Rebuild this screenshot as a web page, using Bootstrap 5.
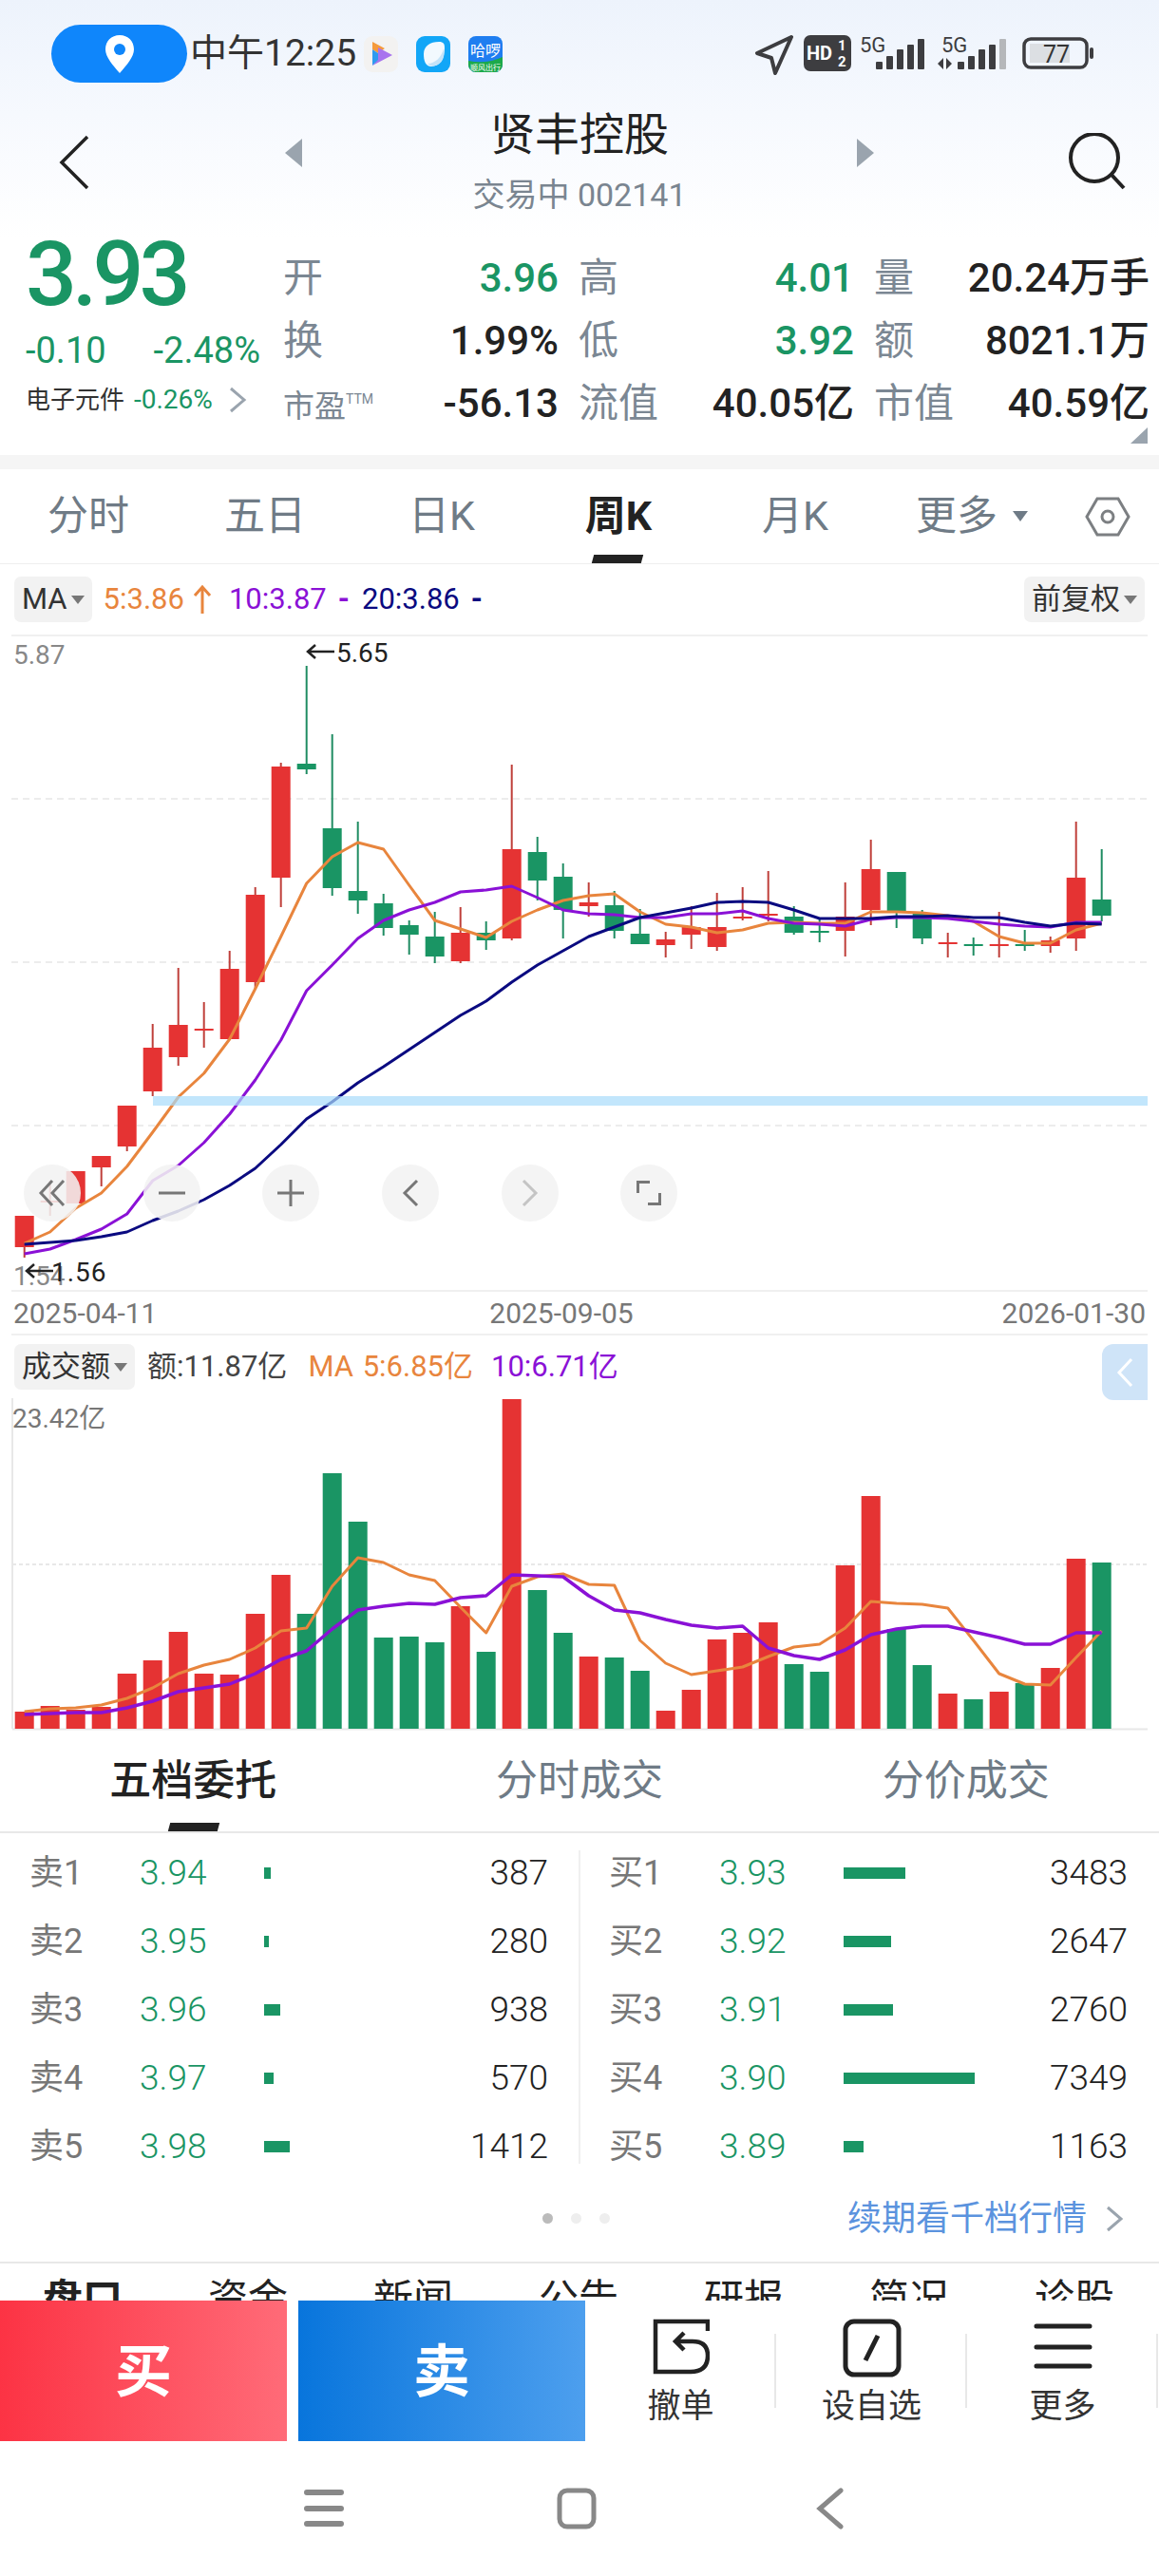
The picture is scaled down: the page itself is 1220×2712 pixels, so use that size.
<!doctype html>
<html lang="zh-CN">

<head>
  <meta charset="utf-8">
  <meta name="viewport" content="width=device-width, initial-scale=1">
  <title>贤丰控股</title>
  <link href="https://cdn.jsdelivr.net/npm/bootstrap@5.3.5/dist/css/bootstrap.min.css" rel="stylesheet">
  <style>
    body {
      width: 1220px;
      height: 2712px;
      overflow: hidden;
      background-color: #fff;
      color: #222;
      font-family: Roboto, "Noto Sans CJK SC", sans-serif;
    }

    .top-head {
      height: 479px;
      position: relative;
      background: linear-gradient(#edf3fc 0, #f6f9fe 120px, #fff 250px);
    }

    .status-bar {
      height: 112px;
      padding: 26px 68px 0 54px;
    }

    .loc-pill {
      width: 143px;
      height: 61px;
      border-radius: 31px;
      background-color: #0f86fb;
    }

    .status-time {
      font-size: 39px;
      line-height: 61px;
      margin: 0 8px 0 3px;
      color: #333;
    }

    .app-icons {
      gap: 19px;
      height: 61px;
    }

    .status-right {
      gap: 11px;
      padding-top: 11px;
    }

    .title-row {
      height: 126px;
    }

    .back-cell {
      width: 300px;
      padding: 30px 0 0 62px;
    }

    .tri-icon {
      margin-top: 34px;
    }

    .search-cell {
      width: 300px;
      padding: 28px 35px 0 0;
    }

    .stock-name {
      font-size: 47px;
      line-height: 60px;
    }

    .stock-sub {
      font-size: 34px;
      line-height: 66px;
      color: #7a8590;
    }

    .quote-left {
      width: 298px;
      padding: 11px 0 0 27px;
      color: #1a9564;
    }

    .quote-price {
      font-size: 95px;
      line-height: 80px;
      font-weight: 500;
      letter-spacing: -5px;
    }

    .quote-change {
      font-size: 38px;
      line-height: 50px;
      margin: 15px 24px 0 0;
    }

    .quote-sector {
      font-size: 26px;
      line-height: 40px;
      margin-top: 7px;
      color: #333;
    }

    .sector-pct {
      font-size: 28px;
      margin-left: 10px;
      color: #1a9564;
    }

    .stat-grid {
      display: grid;
      grid-template-columns: repeat(3, 290px);
      column-gap: 21px;
      grid-auto-rows: 66px;
      padding-top: 22px;
    }

    .stat-cell {
      line-height: 66px;
      font-size: 42px;
      font-weight: 500;
    }

    .stat-label {
      font-size: 42px;
      font-weight: 400;
      color: #7b8793;
    }

    .stat-label-sm {
      font-size: 33px;
    }

    .stat-label sup {
      font-size: 14px;
      top: -14px;
    }

    .green-num {
      color: #1a9564;
    }

    .corner-tri {
      position: absolute;
      right: 12px;
      top: 450px;
    }

    .gray-band {
      height: 15px;
      background-color: #f5f5f5;
    }

    .tab-row {
      height: 100px;
      border-bottom: 1px solid #eee;
    }

    .tab-item {
      width: 186px;
      font-size: 43px;
      color: #6f7b86;
      position: relative;
    }

    .tab-on {
      color: #222;
      font-weight: 700;
    }

    .tab-on::after {
      content: "";
      position: absolute;
      left: 66px;
      bottom: 0;
      width: 52px;
      height: 9px;
      background-color: #222;
      transform: skewX(-15deg);
    }

    .more-tri {
      width: 0;
      height: 0;
      margin-left: 16px;
      border-left: 8px solid transparent;
      border-right: 8px solid transparent;
      border-top: 11px solid #6f7b86;
    }

    .hex-cell {
      width: 100px;
    }

    .ma-row {
      height: 76px;
      margin: 0 12px;
      padding: 13px 3px 0;
      border-bottom: 2px solid #f0f0f0;
      font-size: 31px;
      line-height: 48px;
    }

    .chip-gray {
      height: 48px;
      padding: 0 8px;
      border-radius: 7px;
      background-color: #f2f2f2;
      font-size: 31px;
      color: #333;
    }

    .chip-tri {
      width: 0;
      height: 0;
      margin-left: 4px;
      border-left: 7px solid transparent;
      border-right: 7px solid transparent;
      border-top: 9px solid #777;
    }

    .ma-orange {
      color: #e8853d;
    }

    .ma-purple {
      color: #8a11d6;
    }

    .ma-navy {
      color: #0a0a80;
    }

    .ma-first {
      margin-left: 12px;
    }

    .ma-arrow {
      margin: 0 18px 0 9px;
    }

    .ma-last {
      margin-left: 13px;
    }

    .ma-dash {
      margin-left: 12px;
      font-weight: 700;
    }

    .chart-wrap {
      position: relative;
      height: 688px;
    }

    .chart-wrap svg,
    .vol-chart svg {
      display: block;
    }

    .chart-text {
      font-family: Roboto, "Noto Sans CJK SC", sans-serif;
      font-size: 28px;
    }

    .zoom-btns {
      position: absolute;
      left: 25px;
      top: 556px;
      gap: 65.7px;
    }

    .zoom-btn {
      width: 60px;
      height: 60px;
      border-radius: 50%;
      background-color: rgba(242, 242, 242, .87);
    }

    .date-row {
      height: 48px;
      margin: 0 12px;
      border-top: 2px solid #f0f0f0;
      border-bottom: 2px solid #f0f0f0;
      padding: 0 2px;
      font-size: 30px;
      color: #777;
    }

    .date-mid {
      margin-right: 38px;
    }

    .vol-row {
      height: 62px;
      padding: 9px 12px 0 15px;
      font-size: 31px;
      line-height: 48px;
    }

    .vol-amount {
      margin-left: 13px;
      color: #444;
    }

    .vol-ma5 {
      margin-left: 22px;
    }

    .vol-ma5 b {
      font-weight: 400;
      margin-left: 2px;
    }

    .vol-ma10 {
      margin-left: 19px;
    }

    .fold-tab {
      width: 48px;
      height: 59px;
      margin-left: auto;
      border-radius: 12px 0 0 12px;
      background-color: #cfe4f8;
    }

    .sub-tabs {
      height: 108px;
      border-bottom: 2px solid #e8e8e8;
    }

    .sub-tab {
      width: 406.67px;
      font-size: 44px;
      color: #6f7b86;
      position: relative;
    }

    .sub-tab-on {
      color: #222;
      font-weight: 500;
    }

    .sub-tab-on::after {
      content: "";
      position: absolute;
      left: 178px;
      bottom: 0;
      width: 52px;
      height: 9px;
      background-color: #222;
      transform: skewX(-15deg);
    }

    .book {
      padding-top: 6px;
    }

    .book-col {
      width: 609px;
    }

    .book-side-l {
      padding: 0 32px 0 31px;
    }

    .book-side-r {
      padding: 0 33px 0 30px;
    }

    .book-sep {
      width: 2px;
      margin: 12px 0 18px;
      background-color: #f0f0f0;
    }

    .book-row {
      height: 72px;
      font-size: 37px;
      font-weight: 300;
    }

    .book-lab {
      width: 116px;
      color: #777;
      font-weight: 400;
      font-size: 36px;
    }

    .book-price {
      width: 131px;
      color: #1a9564;
    }

    .book-bar-cell {
      width: 170px;
    }

    .book-bar {
      height: 12px;
      background-color: #1a9564;
    }

    .book-qty {
      margin-left: auto;
    }

    .more-link-row {
      height: 87px;
      padding: 0 38px 6px 31px;
      border-bottom: 2px solid #e8e8e8;
      display: grid;
      grid-template-columns: 1fr auto 1fr;
      align-items: center;
    }

    .page-dots {
      gap: 19px;
    }

    .page-dot {
      width: 11px;
      height: 11px;
      border-radius: 50%;
      background-color: #eee;
    }

    .page-dot-on {
      background-color: #bbb;
    }

    .more-link {
      font-size: 36px;
      color: #5b93de;
      gap: 20px;
    }

    .cut-tabs {
      height: 39px;
      overflow: hidden;
      padding-top: 13px;
    }

    .cut-tab {
      width: 174px;
      font-size: 42px;
      line-height: 50px;
      text-align: center;
    }

    .action-bar {
      height: 148px;
    }

    .buy-btn,
    .sell-btn {
      width: 302px;
      height: 148px;
      padding: 4px 0 0;
      font-size: 60px;
      font-weight: 700;
      color: #fff;
    }

    .buy-btn {
      background: linear-gradient(90deg, #fc3344, #ff6b78);
    }

    .sell-btn {
      margin-left: 12px;
      background: linear-gradient(90deg, #0875dc, #4d9fee);
    }

    .act-cell {
      width: 199px;
      padding: 19px 0 0 2px;
      font-size: 35px;
      line-height: 40px;
      color: #333;
    }

    .act-icon {
      height: 73px;
    }

    .act-sep {
      width: 2px;
      height: 78px;
      margin-top: 35px;
      background-color: #e8e8e8;
    }

    .sys-nav {
      height: 142px;
      gap: 224px;
      padding-right: 6px;
    }
  </style>
</head>

<body>
  <div class="top-head">
    <div class="status-bar d-flex align-items-start">
      <div class="loc-pill d-flex align-items-center justify-content-center">
        <svg width="32" height="40" viewBox="0 0 32 40">
          <path fill="#fff" d="M16 0C7 0 1 6.5 1 15c0 8 8 17 15 25 7-8 15-17 15-25C31 6.500 25 0 16 0z" />
          <circle cx="16" cy="15" r="6" fill="#0f86fb" />
        </svg>
      </div>
      <div class="status-time">中午12:25</div>
      <div class="app-icons d-flex align-items-center">
        <svg width="36" height="38" viewBox="0 0 36 38">
          <rect width="36" height="38" rx="9" fill="#f3f2f1" />
          <path d="M9 6 L22 13 L15 18 L9 14z" fill="#f59a3c" />
          <path d="M9 14 L15 18 L15 26 L9 31z" fill="#2f9bef" />
          <path d="M15 12 L30 20 L9 31 L15 25z" fill="#a874ee" />
        </svg>
        <svg width="36" height="38" viewBox="0 0 36 38">
          <rect width="36" height="38" rx="9" fill="#12a6f7" />
          <path d="M8 19C8 10 15 6 24 6c5 0 6 2 6 7 0 10-5 19-14 19-6 0-8-6-8-13z" fill="#f2f9fe" />
          <path d="M12 29c8 0 15-7 17-16 2 9-2 17-9 18-3 1-6 0-8-2z" fill="#c4e3f8" />
        </svg>
        <svg width="36" height="38" viewBox="0 0 36 38">
          <rect width="36" height="38" rx="8" fill="#1f7ef0" />
          <path d="M0 26 Q18 30 36 22 V30 A8 8 0 0 1 28 38 H8 A8 8 0 0 1 0 30z" fill="#1ca94a" />
          <text x="18" y="21" font-size="16" fill="#fff" text-anchor="middle" font-family="Noto Sans CJK SC">哈啰</text>
          <text x="18" y="36" font-size="8" fill="#fff" text-anchor="middle" font-family="Noto Sans CJK SC">顺风出行</text>
        </svg>
      </div>
      <div class="status-right d-flex align-items-start ms-auto">
        <svg width="40" height="42" viewBox="0 0 40 42" fill="none">
          <path d="M38 2 L2 19 L17 24 L21 40z" stroke="#3d3d40" stroke-width="4" stroke-linejoin="round" />
        </svg>
        <svg width="50" height="38" viewBox="0 0 50 38">
          <rect width="50" height="38" rx="7" fill="#3d3d40" />
          <text x="3" y="26" font-size="20" font-weight="700" fill="#fff" font-family="Roboto">HD</text>
          <text x="36" y="16" font-size="15" font-weight="700" fill="#fff" font-family="Roboto">1</text>
          <text x="36" y="33" font-size="15" font-weight="700" fill="#fff" font-family="Roboto">2</text>
        </svg>
        <svg width="70" height="38" viewBox="0 0 70 38" style="margin-left:-2px">
          <text x="0" y="18" font-size="22" fill="#3d3d40" font-family="Roboto">5G</text>
          <g fill="#3d3d40">
            <rect x="17" y="28" width="7" height="8" rx="1" />
            <rect x="28" y="22" width="7" height="14" rx="1" />
            <rect x="39" y="15" width="7" height="21" rx="1" />
            <rect x="50" y="10" width="7" height="26" rx="1" />
            <rect x="61" y="4" width="7" height="32" rx="1" />
          </g>
        </svg>
        <svg width="74" height="38" viewBox="0 0 74 38" style="margin-left:1px">
          <text x="4" y="18" font-size="22" fill="#3d3d40" font-family="Roboto">5G</text>
          <path d="M0 30 L6 24 V36z M9 24 L15 30 L9 36z" fill="#3d3d40" />
          <g fill="#3d3d40">
            <rect x="21" y="28" width="7" height="8" rx="1" />
            <rect x="32" y="22" width="7" height="14" rx="1" />
            <rect x="43" y="15" width="7" height="21" rx="1" />
            <rect x="54" y="10" width="7" height="26" rx="1" />
          </g>
          <rect x="65" y="4" width="7" height="32" rx="1" fill="#b5b7ba" />
        </svg>
        <svg width="76" height="34" viewBox="0 0 76 34" style="margin:2px 0 0 4px">
          <rect x="2" y="2" width="66" height="30" rx="7" fill="none" stroke="#3d3d40" stroke-width="3.500" />
          <rect x="8" y="7" width="42" height="20" fill="#dcdfe3" />
          <text x="22" y="27" font-size="25" fill="#333" font-family="Roboto">77</text>
          <rect x="71" y="11" width="4" height="12" rx="2" fill="#3d3d40" />
        </svg>
      </div>
    </div>

    <div class="title-row d-flex align-items-start">
      <div class="back-cell">
        <svg class="d-block" width="32" height="58" viewBox="0 0 32 58" fill="none">
          <path d="M30 2 L3 29 L30 56" stroke="#222" stroke-width="3.500" />
        </svg>
      </div>
      <svg class="tri-icon" width="18" height="30" viewBox="0 0 18 30">
        <path d="M18 0 V30 L0 15z" fill="#9aa4ae" />
      </svg>
      <div class="flex-fill text-center">
        <div class="stock-name">贤丰控股</div>
        <div class="stock-sub">交易中 002141</div>
      </div>
      <svg class="tri-icon" width="18" height="30" viewBox="0 0 18 30">
        <path d="M0 0 V30 L18 15z" fill="#9aa4ae" />
      </svg>
      <div class="search-cell text-end">
        <svg width="62" height="60" viewBox="0 0 62 60" fill="none" stroke="#222" stroke-width="4">
          <circle cx="29" cy="26" r="25" />
          <path d="M47 44 L60 58" />
        </svg>
      </div>
    </div>

    <div class="d-flex">
      <div class="quote-left">
        <div class="quote-price">3.93</div>
        <div class="d-flex justify-content-between">
          <div class="quote-change">-0.10</div>
          <div class="quote-change">-2.48%</div>
        </div>
        <div class="quote-sector d-flex align-items-center">
          电子元件<span class="sector-pct">-0.26%</span>
          <svg class="ms-3" width="20" height="28" viewBox="0 0 20 28" fill="none">
            <path d="M3 2 L17 14 L3 26" stroke="#9aa4ae" stroke-width="3" />
          </svg>
        </div>
      </div>
      <div class="stat-grid" id="statGrid"></div>
    </div>

    <svg class="corner-tri" width="18" height="17" viewBox="0 0 18 17">
      <path d="M18 0 V17 H0z" fill="#9aa4ae" />
    </svg>
  </div>

  <div class="gray-band"></div>

  <div class="tab-row d-flex">
    <div class="tab-item d-flex align-items-center justify-content-center">分时</div>
    <div class="tab-item d-flex align-items-center justify-content-center">五日</div>
    <div class="tab-item d-flex align-items-center justify-content-center">日K</div>
    <div class="tab-item tab-on d-flex align-items-center justify-content-center">周K</div>
    <div class="tab-item d-flex align-items-center justify-content-center">月K</div>
    <div class="tab-item d-flex align-items-center justify-content-center">更多<span class="more-tri"></span></div>
    <div class="hex-cell d-flex align-items-center justify-content-center">
      <svg width="48" height="42" viewBox="0 0 48 42" fill="none" stroke="#7c7f82" stroke-width="3">
        <path d="M13 2 H35 L46 21 L35 40 H13 L2 21z" />
        <circle cx="24" cy="21" r="6" />
      </svg>
    </div>
  </div>

  <div class="ma-row d-flex justify-content-between align-items-start">
    <div class="d-flex align-items-center">
      <div class="chip-gray d-flex align-items-center">MA<span class="chip-tri"></span></div>
      <span class="ma-orange ma-first">5:3.86</span>
      <svg class="ma-arrow" width="20" height="32" viewBox="0 0 20 32" fill="none" stroke="#e8853d" stroke-width="3">
        <path d="M10 31 V3 M2 12 L10 3 L18 12" />
      </svg>
      <span class="ma-purple">10:3.87<span class="ma-dash">-</span></span>
      <span class="ma-navy ma-last">20:3.86<span class="ma-dash">-</span></span>
    </div>
    <div class="chip-gray d-flex align-items-center">前复权<span class="chip-tri"></span></div>
  </div>

  <div class="chart-wrap">
    <svg id="priceChart" width="1220" height="688" viewBox="0 670 1220 688"></svg>
    <div class="zoom-btns d-flex">
      <div class="zoom-btn d-flex align-items-center justify-content-center">
        <svg width="30" height="30" viewBox="0 0 30 30" fill="none" stroke="#777" stroke-width="3">
          <path d="M15 2 L3 15 L15 28 M27 2 L15 15 L27 28" />
        </svg>
      </div>
      <div class="zoom-btn d-flex align-items-center justify-content-center">
        <svg width="30" height="30" viewBox="0 0 30 30" fill="none" stroke="#777" stroke-width="3">
          <path d="M1 15 H29" />
        </svg>
      </div>
      <div class="zoom-btn d-flex align-items-center justify-content-center">
        <svg width="30" height="30" viewBox="0 0 30 30" fill="none" stroke="#777" stroke-width="3">
          <path d="M1 15 H29 M15 1 V29" />
        </svg>
      </div>
      <div class="zoom-btn d-flex align-items-center justify-content-center">
        <svg width="18" height="30" viewBox="0 0 18 30" fill="none" stroke="#777" stroke-width="3">
          <path d="M16 2 L3 15 L16 28" />
        </svg>
      </div>
      <div class="zoom-btn d-flex align-items-center justify-content-center">
        <svg width="18" height="30" viewBox="0 0 18 30" fill="none" stroke="#c4c4c4" stroke-width="3">
          <path d="M2 2 L15 15 L2 28" />
        </svg>
      </div>
      <div class="zoom-btn d-flex align-items-center justify-content-center">
        <svg width="26" height="26" viewBox="0 0 26 26" fill="none" stroke="#777" stroke-width="3">
          <path d="M1.500 13 V1.500 H14 M24.500 13 V24.500 H12" />
        </svg>
      </div>
    </div>
  </div>

  <div class="date-row d-flex justify-content-between align-items-center">
    <span>2025-04-11</span>
    <span class="date-mid">2025-09-05</span>
    <span>2026-01-30</span>
  </div>

  <div class="vol-row d-flex align-items-start">
    <div class="chip-gray d-flex align-items-center">成交额<span class="chip-tri"></span></div>
    <span class="vol-amount">额:11.87亿</span>
    <span class="vol-ma5 ma-orange">MA <b>5:6.85亿</b></span>
    <span class="vol-ma10 ma-purple">10:6.71亿</span>
    <div class="fold-tab d-flex align-items-center justify-content-center">
      <svg width="18" height="32" viewBox="0 0 18 32" fill="none" stroke="#fff" stroke-width="3">
        <path d="M16 2 L3 16 L16 30" />
      </svg>
    </div>
  </div>

  <div class="vol-chart">
    <svg id="volChart" width="1220" height="354" viewBox="0 1468 1220 354"></svg>
  </div>

  <div class="sub-tabs d-flex">
    <div class="sub-tab sub-tab-on d-flex align-items-center justify-content-center">五档委托</div>
    <div class="sub-tab d-flex align-items-center justify-content-center">分时成交</div>
    <div class="sub-tab d-flex align-items-center justify-content-center">分价成交</div>
  </div>

  <div class="book d-flex">
    <div class="book-col book-side-l" id="sellSide"></div>
    <div class="book-sep"></div>
    <div class="book-col book-side-r" id="buySide"></div>
  </div>

  <div class="more-link-row">
    <div></div>
    <div class="page-dots d-flex">
      <span class="page-dot page-dot-on"></span>
      <span class="page-dot"></span>
      <span class="page-dot"></span>
    </div>
    <div class="more-link d-flex align-items-center justify-content-end">
      续期看千档行情
      <svg width="18" height="28" viewBox="0 0 18 28" fill="none">
        <path d="M2 2 L16 14 L2 26" stroke="#9aa4ae" stroke-width="3" />
      </svg>
    </div>
  </div>

  <div class="cut-tabs d-flex">
    <div class="cut-tab fw-bold">盘口</div>
    <div class="cut-tab">资金</div>
    <div class="cut-tab">新闻</div>
    <div class="cut-tab">公告</div>
    <div class="cut-tab">研报</div>
    <div class="cut-tab">简况</div>
    <div class="cut-tab">诊股</div>
  </div>

  <div class="action-bar d-flex">
    <button type="button" class="btn buy-btn rounded-0 border-0">买</button>
    <button type="button" class="btn sell-btn rounded-0 border-0">卖</button>
    <div class="act-cell text-center">
      <div class="act-icon">
        <svg width="60" height="60" viewBox="0 0 60 60" fill="none" stroke="#222" stroke-width="4.500">
          <path d="M58 13 V3 H3 V56 H40 Q58 56 58 39 Q58 24 42 24 H25 M33 15 L24 24 L33 33" />
        </svg>
      </div>
      <div>撤单</div>
    </div>
    <div class="act-sep"></div>
    <div class="act-cell text-center">
      <div class="act-icon">
        <svg width="62" height="62" viewBox="0 0 62 62" fill="none" stroke="#222" stroke-width="5">
          <rect x="3" y="3" width="56" height="56" rx="9" />
          <path d="M37 18 L24 44" />
        </svg>
      </div>
      <div>设自选</div>
    </div>
    <div class="act-sep"></div>
    <div class="act-cell text-center">
      <div class="act-icon">
        <svg width="62" height="62" viewBox="0 0 62 62" fill="none" stroke="#222" stroke-width="5" stroke-linecap="round">
          <path d="M3 8 H59 M3 30 H59 M3 50 H59" />
        </svg>
      </div>
      <div>更多</div>
    </div>
    <div class="act-sep"></div>
  </div>

  <div class="sys-nav d-flex align-items-center justify-content-center">
    <svg width="42" height="42" viewBox="0 0 42 42" fill="none" stroke="#888" stroke-width="6" stroke-linecap="round">
      <path d="M3 4 H39 M3 21 H39 M3 37 H39" />
    </svg>
    <svg width="42" height="44" viewBox="0 0 42 44" fill="none" stroke="#888" stroke-width="5">
      <rect x="3" y="3" width="36" height="38" rx="8" />
    </svg>
    <svg width="42" height="44" viewBox="0 0 42 44" fill="none" stroke="#888" stroke-width="5" stroke-linecap="round">
      <path d="M33 3 L11 22 L33 41" />
    </svg>
  </div>

  <script>
    const GREEN = "#1a9564", RED = "#e53333", GREEN_WICK = "#1f8c62", RED_WICK = "#bf3f3a";

    const stats = [
      ["开", "3.96", true], ["高", "4.01", true], ["量", "20.24万手", false],
      ["换", "1.99%", false], ["低", "3.92", true], ["额", "8021.1万", false],
      ["<span class='stat-label-sm'>市盈</span><sup>TTM</sup>", "-56.13", false], ["流值", "40.05亿", false], ["市值", "40.59亿", false]
    ];
    document.getElementById("statGrid").innerHTML = stats.map(s => `
      <div class="stat-cell d-flex justify-content-between">
        <span class="stat-label">${s[0]}</span>
        <span class="${s[2] ? "green-num" : ""}">${s[1]}</span>
      </div>`).join("");

    const xAt = i => 25.7 + 27 * i;
    const linePath = (ys, color, w) =>
      `<polyline fill="none" stroke="${color}" stroke-width="${w}" stroke-linejoin="round" points="${ys.map((y, i) => xAt(i) + "," + y).join(" ")}" />`;
    const dashed = y => `<line x1="12" x2="1208" y1="${y}" y2="${y}" stroke="#ececec" stroke-width="2" stroke-dasharray="7 5" />`;

    // [color, wick top, wick bottom, body top, body bottom]
    const candles = [
      ["r", 1280, 1324, 1280, 1313], ["r", 1243, 1280, 1264, 1266], ["r", 1233, 1267, 1233, 1267],
      ["r", 1217, 1249, 1217, 1229], ["r", 1164, 1212, 1164, 1207], ["r", 1078, 1154, 1103, 1149],
      ["r", 1019, 1122, 1079, 1113], ["r", 1055, 1103, 1083, 1085], ["r", 1001, 1094, 1020, 1094],
      ["r", 934, 1041, 942, 1034], ["r", 803, 955, 807, 924], ["g", 701, 815, 804, 810],
      ["g", 773, 943, 872, 935], ["g", 865, 962, 938, 948], ["g", 941, 985, 951, 977],
      ["g", 969, 1005, 974, 984], ["g", 960, 1014, 986, 1007], ["r", 955, 1014, 982, 1012],
      ["g", 970, 1000, 982, 990], ["r", 805, 990, 894, 988], ["g", 881, 948, 897, 927],
      ["g", 909, 988, 923, 958], ["r", 929, 965, 950, 954], ["g", 938, 988, 953, 980],
      ["g", 957, 994, 983, 994], ["r", 981, 1008, 989, 995], ["r", 954, 999, 976, 984],
      ["r", 940, 1001, 976, 997], ["r", 934, 969, 965, 967], ["r", 917, 970, 962, 964],
      ["g", 954, 984, 965, 982], ["g", 968, 992, 980, 982], ["r", 929, 1007, 965, 980],
      ["r", 884, 974, 915, 958], ["g", 918, 977, 918, 961], ["g", 958, 994, 962, 988],
      ["r", 982, 1008, 992, 994], ["g", 987, 1006, 994, 996], ["r", 960, 1008, 994, 996],
      ["g", 979, 1001, 994, 996], ["r", 986, 1003, 990, 996], ["r", 865, 1001, 924, 988],
      ["g", 894, 970, 947, 964]
    ];

    const ma5 = [1309, 1297, 1272, 1256, 1228, 1192, 1155, 1130, 1094, 1041, 986, 930, 902, 887, 894, 932, 969, 978, 987, 970, 958, 948, 943, 941, 960, 973, 976, 982, 979, 972, 971, 972, 972, 960, 960, 961, 964, 970, 986, 993, 993, 979, 972];
    const ma10 = [1320, 1315, 1305, 1294, 1278, 1243, 1227, 1203, 1173, 1137, 1095, 1043, 1016, 988, 969, 958, 950, 939, 937, 933, 945, 958, 962, 963, 966, 966, 962, 962, 959, 967, 972, 973, 975, 968, 966, 966, 967, 970, 973, 975, 976, 971, 971];
    const ma20 = [1310, 1308, 1306, 1302, 1297, 1285, 1275, 1263, 1248, 1230, 1205, 1178, 1160, 1140, 1123, 1105, 1087, 1069, 1054, 1034, 1016, 1001, 986, 976, 966, 961, 956, 950, 949, 950, 958, 967, 967, 967, 965, 965, 964, 966, 966, 971, 975, 972, 973];

    let price = dashed(841) + dashed(1013) + dashed(1185);
    candles.forEach((c, i) => {
      const x = xAt(i);
      price += `<line x1="${x}" x2="${x}" y1="${c[1]}" y2="${c[2]}" stroke="${c[0] === "r" ? RED_WICK : GREEN_WICK}" stroke-width="2" />`;
      price += `<rect x="${x - 10}" y="${c[3]}" width="20" height="${c[4] - c[3]}" fill="${c[0] === "r" ? RED : GREEN}" />`;
    });
    price += linePath(ma5, "#e8853d", 3) + linePath(ma10, "#8a11d6", 3) + linePath(ma20, "#0a0a80", 3);
    price += `<rect x="161" y="1154" width="1047" height="10" fill="#a8dbfb" fill-opacity=".7" />`;
    price += `<text class="chart-text" x="14" y="699" fill="#888">5.87</text>`;
    price += `<path d="M324 686 H352 M332 679 L324 686 L332 693" fill="none" stroke="#222" stroke-width="2.500" />`;
    price += `<text class="chart-text" x="354" y="697" fill="#222">5.65</text>`;
    price += `<text class="chart-text" x="14" y="1353" fill="#888">1.54</text>`;
    price += `<path d="M28 1338 H56 M36 1331 L28 1338 L36 1345" fill="none" stroke="#222" stroke-width="2.500" />`;
    price += `<text class="chart-text" x="54" y="1349" fill="#222" style="letter-spacing:1px">1.56</text>`;
    document.getElementById("priceChart").innerHTML = price;

    // each: [color, bar top]
    const volBars = [
      ["r", 1802], ["r", 1796], ["r", 1800], ["r", 1797], ["r", 1762], ["r", 1748], ["r", 1718], ["r", 1762], ["r", 1763], ["r", 1699], ["r", 1658],
      ["g", 1699], ["g", 1551], ["g", 1602], ["g", 1724], ["g", 1723], ["g", 1729], ["r", 1691], ["g", 1739], ["r", 1473], ["g", 1674], ["g", 1719],
      ["r", 1744], ["g", 1745], ["g", 1759], ["r", 1801], ["r", 1779], ["r", 1726], ["r", 1719], ["r", 1708], ["g", 1752], ["g", 1760], ["r", 1648],
      ["r", 1575], ["g", 1715], ["g", 1753], ["r", 1783], ["g", 1789], ["r", 1781], ["g", 1772], ["r", 1756], ["r", 1641], ["g", 1645]
    ];
    const volMa5 = [1802, 1799, 1798, 1795, 1788, 1777, 1762, 1753, 1747, 1735, 1717, 1714, 1670, 1640, 1645, 1658, 1664, 1692, 1719, 1670, 1660, 1657, 1668, 1669, 1727, 1751, 1763, 1759, 1755, 1744, 1734, 1731, 1714, 1686, 1688, 1689, 1693, 1727, 1762, 1773, 1774, 1745, 1717];
    const volMa10 = [1805, 1804, 1803, 1803, 1798, 1791, 1781, 1777, 1773, 1762, 1747, 1738, 1715, 1695, 1691, 1688, 1689, 1682, 1680, 1658, 1659, 1660, 1680, 1695, 1698, 1705, 1711, 1714, 1712, 1735, 1743, 1747, 1737, 1721, 1715, 1712, 1712, 1718, 1724, 1731, 1731, 1719, 1719];

    let vol = `<line x1="13" x2="13" y1="1472" y2="1820" stroke="#e8e8e8" stroke-width="2" />`;
    vol += `<line x1="13" x2="1208" y1="1820.500" y2="1820.500" stroke="#e8e8e8" stroke-width="2" />`;
    vol += `<line x1="13" x2="1208" y1="1647" y2="1647" stroke="#e8e8e8" stroke-width="2" stroke-dasharray="4 3" />`;
    volBars.forEach((b, i) => {
      vol += `<rect x="${xAt(i) - 10}" y="${b[1]}" width="20" height="${1820 - b[1]}" fill="${b[0] === "r" ? RED : GREEN}" />`;
    });
    vol += linePath(volMa5, "#e8853d", 3) + linePath(volMa10, "#8a11d6", 3.5);
    vol += `<text class="chart-text" x="13" y="1503" fill="#777">23.42亿</text>`;
    document.getElementById("volChart").innerHTML = vol;

    const sell = [["卖1", "3.94", 7, 387], ["卖2", "3.95", 5, 280], ["卖3", "3.96", 17, 938], ["卖4", "3.97", 10, 570], ["卖5", "3.98", 27, 1412]];
    const buy = [["买1", "3.93", 65, 3483], ["买2", "3.92", 50, 2647], ["买3", "3.91", 52, 2760], ["买4", "3.90", 138, 7349], ["买5", "3.89", 21, 1163]];
    const renderBook = (rows) => rows.map(r => `
      <div class="book-row d-flex align-items-center">
        <span class="book-lab">${r[0]}</span>
        <span class="book-price">${r[1]}</span>
        <div class="book-bar-cell"><div class="book-bar" style="width:${r[2]}px"></div></div>
        <span class="book-qty">${r[3]}</span>
      </div>`).join("");
    document.getElementById("sellSide").innerHTML = renderBook(sell);
    document.getElementById("buySide").innerHTML = renderBook(buy);
  </script>

  <script src="https://cdn.jsdelivr.net/npm/bootstrap@5.3.5/dist/js/bootstrap.bundle.min.js"></script>
</body>

</html>
